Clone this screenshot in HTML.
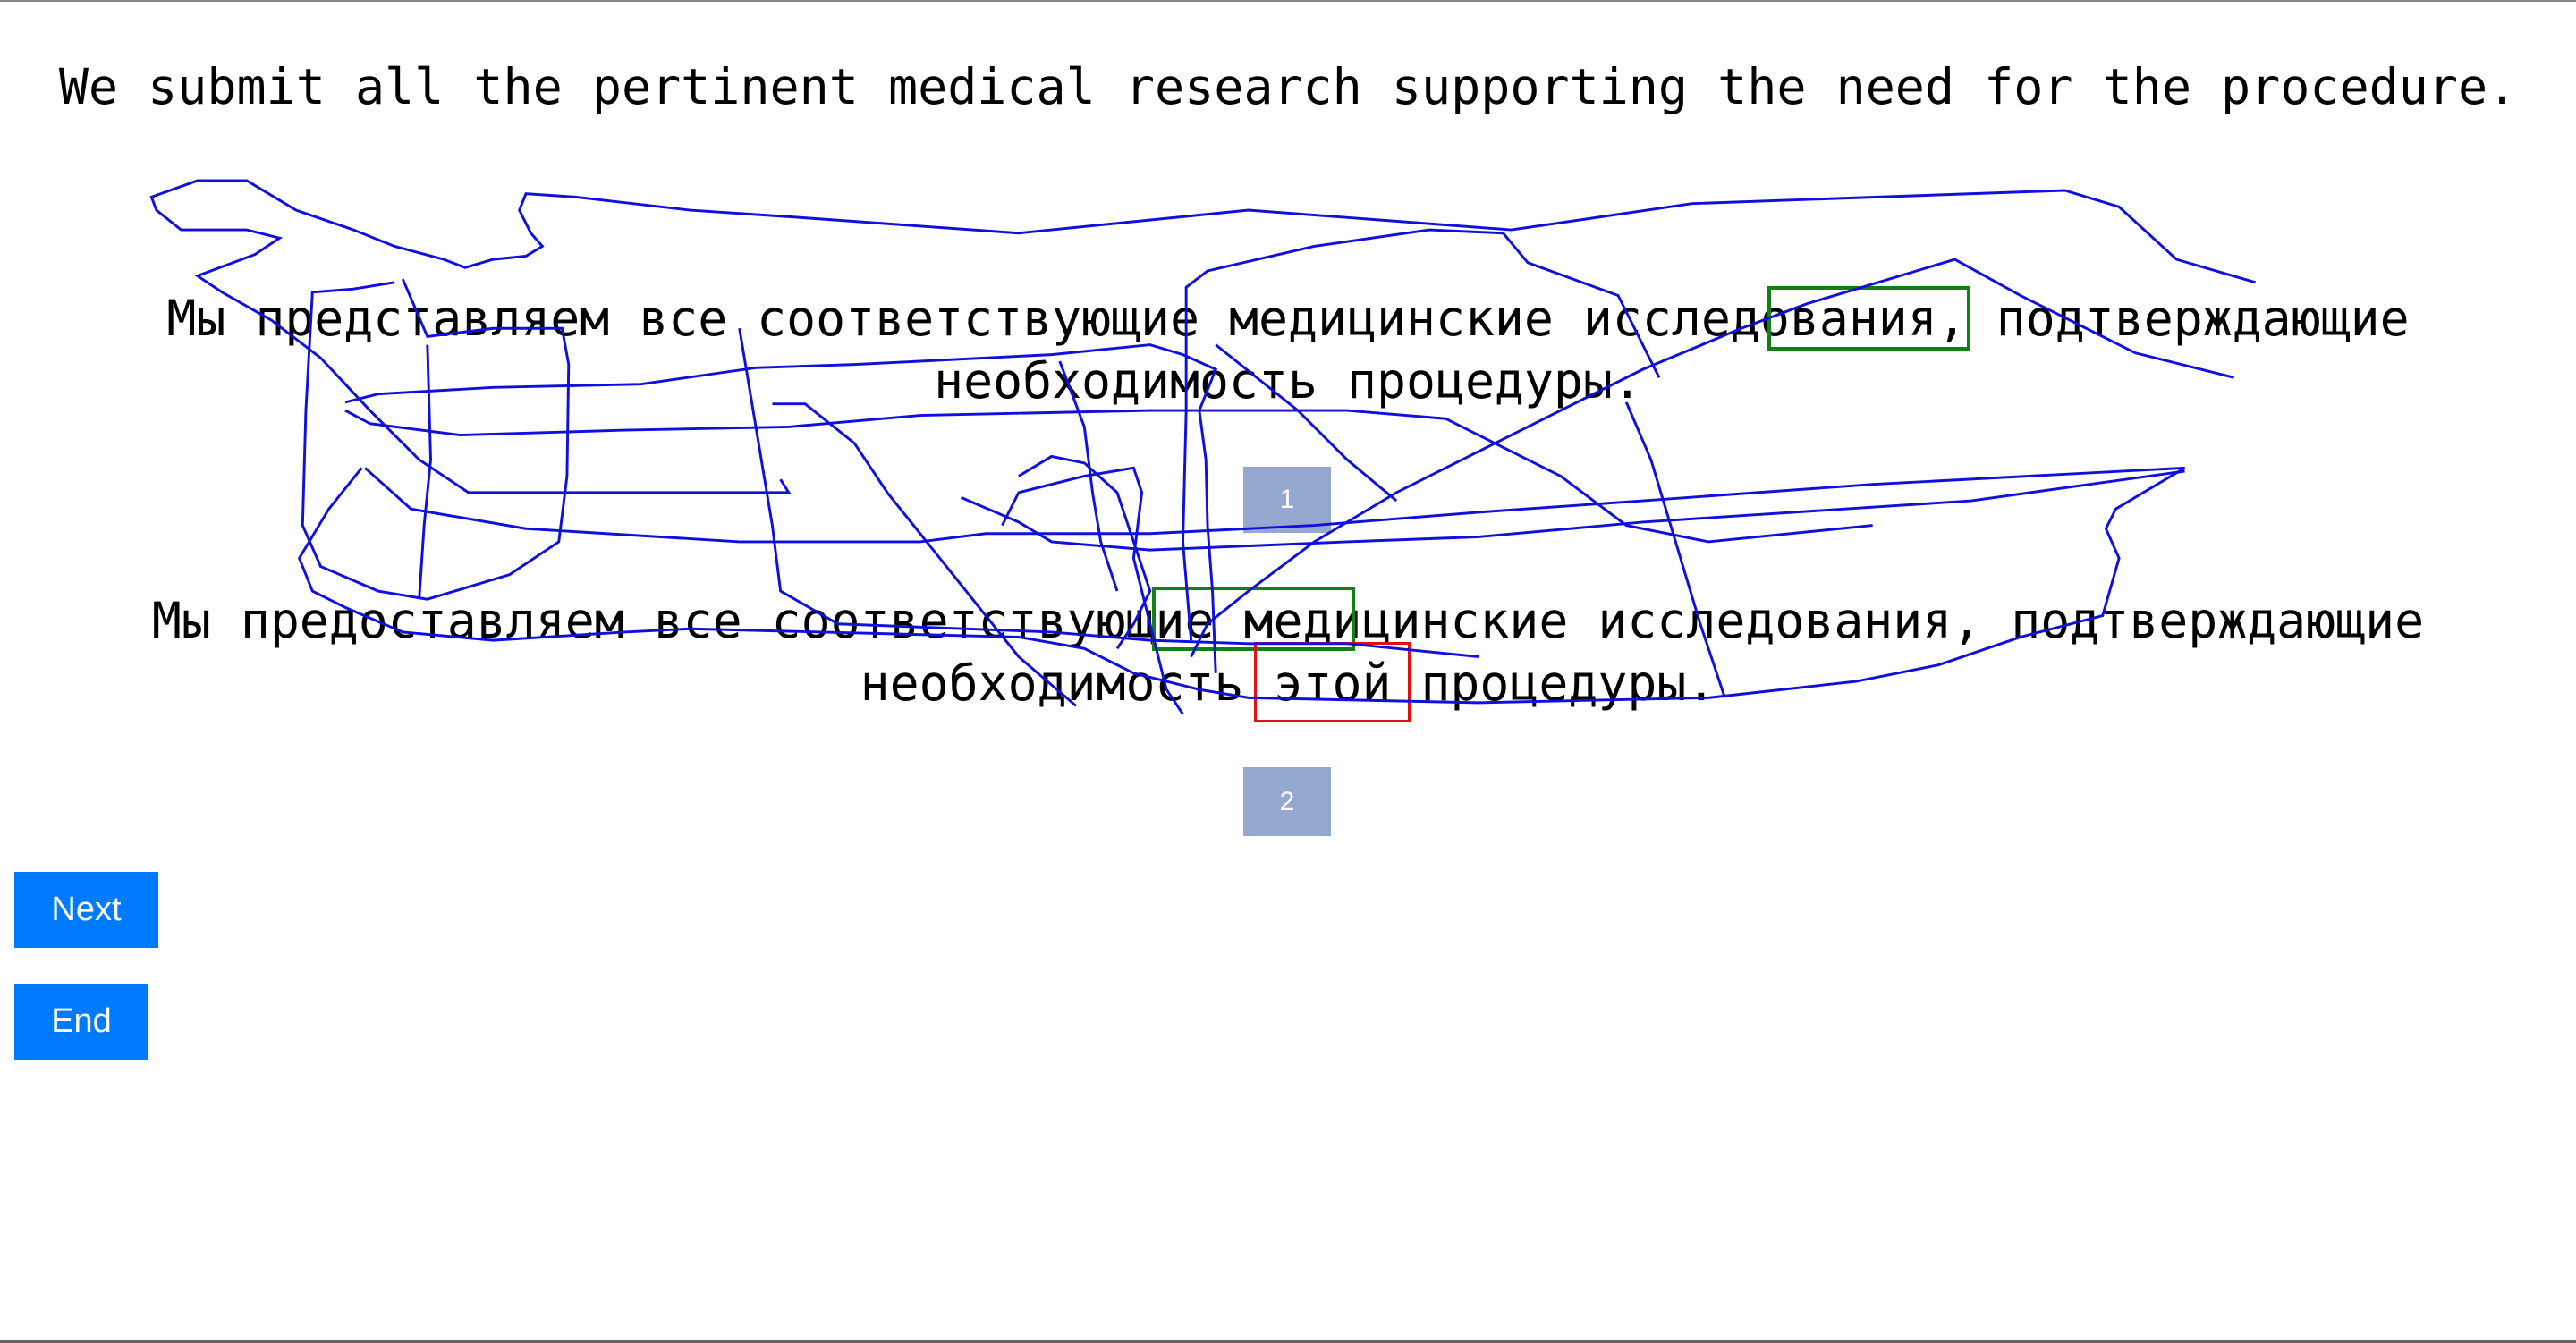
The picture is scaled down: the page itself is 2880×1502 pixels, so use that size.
<!DOCTYPE html>
<html><head><meta charset="utf-8">
<style>
html,body{margin:0;padding:0;width:2880px;height:1502px;overflow:hidden;background:#fff;position:relative}
.t{position:absolute;left:0;width:2880px;text-align:center;font-family:"DejaVu Sans Mono","Liberation Mono",monospace;color:#000;white-space:nowrap}
.num{position:absolute;background:#94a8d0;color:#fff;font-family:"Liberation Sans",Arial,sans-serif;font-size:30px;display:flex;align-items:center;justify-content:center}
.btn{position:absolute;background:#007bff;color:#fff;font-family:"Liberation Sans",Arial,sans-serif;font-size:38px;display:flex;align-items:center;justify-content:center}
.box{position:absolute;box-sizing:border-box}
</style></head><body>
<div style="position:absolute;left:0;top:0;width:2880px;height:2px;background:#888"></div>
<div style="position:absolute;left:0;top:1499px;width:2880px;height:3px;background:#666"></div>
<div class="t" style="top:62px;font-size:55px;line-height:70px">We submit all the pertinent medical research supporting the need for the procedure.</div>
<div class="t" style="top:321px;font-size:54.8px;line-height:70px">Мы представляем все соответствующие медицинские исследования, подтверждающие<br>необходимость процедуры.</div>
<div class="num" style="left:1390px;top:522px;width:98px;height:74px">1</div>
<div class="t" style="top:659px;font-size:54.8px;line-height:70px">Мы предоставляем все соответствующие медицинские исследования, подтверждающие<br>необходимость этой процедуры.</div>
<div class="num" style="left:1390px;top:858px;width:98px;height:77px">2</div>
<div class="box" style="left:1976px;top:320px;width:227px;height:72px;border:4px solid #138013"></div>
<div class="box" style="left:1288px;top:656px;width:227px;height:72px;border:4px solid #138013"></div>
<div class="box" style="left:1402px;top:718px;width:175px;height:90px;border:3px solid #e01010"></div>
<div class="btn" style="left:16px;top:975px;width:161px;height:85px">Next</div>
<div class="btn" style="left:16px;top:1100px;width:150px;height:85px">End</div>
<svg style="position:absolute;left:0;top:0" width="2880" height="1502" viewBox="0 0 1568 818" fill="none" stroke="#1010dd" stroke-width="1.6">
<polyline points="1373,172 1325,158 1290,126 1257,116 1030,124 920,140 760,128 620,142 480,132 420,128 350,120 320,118 316,128 323,142 330,150 320,156 300,158 283,163 270,158 240,150 215,140 180,128 150,110 120,110 92,120 95,128 110,140 150,140 170,145 155,155 120,168 135,178 165,195 195,218 225,250 255,280 285,300 480,300 475,292"/>
<polyline points="240,172 215,176 190,178 186,250 184,320 195,345 230,360 260,365 290,356 310,350 340,330 345,290 346,222 342,200 300,200 260,205 245,170"/>
<polyline points="210,245 230,240 300,236 390,234 460,224 520,222 640,216 700,210 720,216 740,225 730,250 734,280 735,320 738,360 740,410"/>
<polyline points="210,250 225,258 280,265 380,262 480,260 560,253 700,250 820,250 880,255 910,270 950,290 990,320 1040,330 1140,320"/>
<polyline points="220,285 200,310 182,340 190,360 210,370 245,385 300,390 380,385 420,383 500,385 620,388 660,395 690,410 730,420 760,425 900,428 1040,425 1130,415 1180,405 1230,388 1280,375 1290,340 1282,322 1288,310 1330,285 1140,295 1000,305 900,312 800,320 700,325 600,325 560,330 450,330 320,322 250,310 222,285"/>
<polyline points="260,210 262,280 258,320 255,365"/>
<polyline points="450,200 460,260 470,320 475,360 510,380 640,385 700,390 760,392 820,392 900,400"/>
<polyline points="470,246 490,246 520,270 540,300 580,350 620,400 655,430"/>
<polyline points="585,303 620,318 640,330 700,335 820,330 900,327 1000,318 1200,305 1330,287"/>
<polyline points="620,290 640,278 660,282 680,300 690,330 700,360 690,380 680,395"/>
<polyline points="610,320 620,300 660,290 690,285 695,300 690,340 700,380 710,420 720,435"/>
<polyline points="725,400 735,380 760,360 800,330 850,300 900,275 950,250 1000,225 1060,200 1100,185 1190,158 1230,180 1300,215 1360,230"/>
<polyline points="740,210 790,250 820,280 850,305"/>
<polyline points="990,245 1005,280 1020,330 1035,380 1045,410 1050,425"/>
<polyline points="725,390 720,330 722,250 722,175 735,165 800,150 870,140 915,142 930,160 985,180 1000,210 1010,230"/>
<polyline points="645,220 660,260 665,300 670,330 680,360"/>
</svg>
</body></html>
